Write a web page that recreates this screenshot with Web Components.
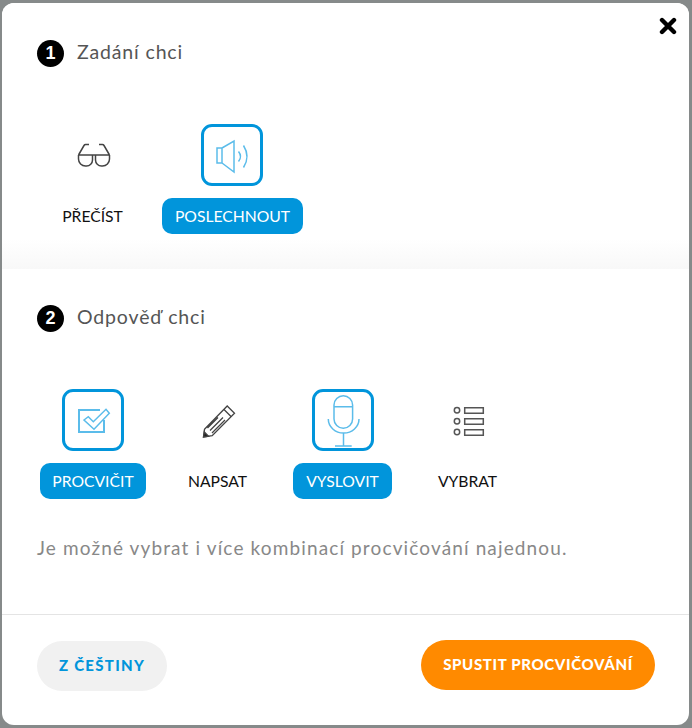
<!DOCTYPE html>
<html lang="cs">
<head>
<meta charset="utf-8">
<title>Procvičování</title>
<style>
  html, body { margin: 0; padding: 0; height: 100%; }
  body { background: #868a8a; font-family: "Lato", "Liberation Sans", sans-serif; overflow: hidden; }
</style>
</head>
<body>
<template id="modal-tpl">
  <style>
    :host {
      display: flex;
      flex-direction: column;
      position: relative;
      box-sizing: border-box;
      width: 687px;
      height: 722px;
      margin: 3px 0 0 2px;
      background: #fff;
      border-radius: 12px;
      overflow: hidden;
    }
    button {
      position: absolute;
      top: 14px;
      right: 12px;
      width: 18px;
      height: 18px;
      padding: 0;
      border: 0;
      background: none;
      line-height: 0;
    }
  </style>
  <button aria-label="Zavřít">
    <svg width="18" height="18" viewBox="0 0 18 18"><path d="M3 3l12 12M15 3L3 15" stroke="#000" stroke-width="4.4" stroke-linecap="round"/></svg>
  </button>
  <slot></slot>
</template>

<template id="section-tpl">
  <style>
    :host { display: block; box-sizing: border-box; padding: 37px 35px 35px; }
    :host([shaded]) { background: linear-gradient(#fff 236px, #f8f8f8 266px); }
    :host([second]) { padding: 36px 35px 0; height: 345px; }
    .head { display: flex; align-items: center; gap: 13px; height: 27px; }
    .num {
      width: 27px; height: 27px; border-radius: 50%;
      background: #000; color: #fff;
      display: grid; place-items: center;
      font: 700 18px "Liberation Sans", sans-serif;
    }
    .title { font-size: 19.5px; color: #555; letter-spacing: .85px; padding-bottom: 4px; }
    .row { display: flex; margin-top: 57px; margin-left: 3px; }
    :host([shaded]) .row { margin-left: 13px; }
  </style>
  <div class="head"><span class="num"></span><span class="title"></span></div>
  <div class="row"><slot></slot></div>
  <slot name="after"></slot>
</template>

<template id="option-tpl">
  <style>
    :host { display: flex; flex-direction: column; align-items: center; color: #222; }
    :host([selected]) { color: #5bbcea; }
    .box {
      box-sizing: border-box;
      width: 62px; height: 62px;
      margin-right: var(--nudge, 0);
      border: 3px solid transparent;
      border-radius: 11px;
      display: grid; place-items: center;
    }
    :host([selected]) .box { border-color: #0195db; }
    .label {
      box-sizing: border-box;
      margin-top: 12px;
      height: 36px;
      width: 100%;
      display: flex; align-items: center; justify-content: center;
      border-radius: 10px;
      font-size: 15.7px;
      color: #111;
      white-space: nowrap;
    }
    :host([selected]) .label { background: #0195db; color: #fff; }
    ::slotted(svg) { display: block; width: 56px; height: 56px; fill: none; }
  </style>
  <div class="box"><slot></slot></div>
  <div class="label"></div>
</template>

<template id="footer-tpl">
  <style>
    :host {
      display: flex;
      justify-content: space-between;
      align-items: flex-start;
      box-sizing: border-box;
      height: 111px;
      padding: 25px 34px 0 35px;
      border-top: 1px solid #e4e4e4;
    }
  </style>
  <slot></slot>
</template>

<template id="pill-tpl">
  <style>
    :host {
      display: flex; align-items: center; justify-content: center;
      box-sizing: border-box;
      height: 50px;
      border-radius: 25px;
      font-weight: 900;
      font-size: 15px;
      white-space: nowrap;
      background: #f1f1f1;
      color: #0195db;
      margin-top: 1px;
      width: 130px;
      letter-spacing: 1.3px;
      padding-bottom: 2px;
    }
    :host([primary]) { background: #ff8a00; color: #fff; margin-top: 0; width: 234px; letter-spacing: .65px; }
  </style>
  <slot></slot>
</template>

<practice-modal>
  <practice-section num="1" heading="Zadání chci" shaded>
    <practice-option label="PŘEČÍST" style="width:85px">
      <svg viewBox="3 3 56 56" stroke="#444" stroke-width="1.5">
        <path d="M16.500 31H47.500M16.500 31v4a7 7 0 0 0 7 7h1a6 6 0 0 0 6-6v-5M33.500 31v5a6 6 0 0 0 6 6h1a7 7 0 0 0 7-7v-4M16.500 31L22 21.500a2 2 0 0 1 2-1h3M47.500 31L42 21.500a2 2 0 0 0-2-1h-3"/>
      </svg>
    </practice-option>
    <practice-option label="POSLECHNOUT" selected style="width:141px;margin-left:27px;--nudge:1px">
      <svg viewBox="3 3 56 56" stroke="currentColor" stroke-width="1.5">
        <path d="M16 24h5v15h-5zM21 24L33 17V48L21 39M37.500 27.500q4 5 0 10M42.500 21.500q7 11 0 22"/>
      </svg>
    </practice-option>
  </practice-section>

  <practice-section num="2" heading="Odpověď chci" second>
    <practice-option label="PROCVIČIT" selected style="width:106px">
      <svg viewBox="3 3 56 56" stroke="currentColor" stroke-width="1.500">
        <path stroke-width="2" d="M38 21H17V43H42V31"/>
        <path fill="#fff" d="M22 31L26.300 27.700L31.300 32.700L44 20.300L47.300 24.300L32 40.300Z"/>
      </svg>
    </practice-option>
    <practice-option label="NAPSAT" style="width:83px;margin-left:30px">
      <svg viewBox="3 3 56 56" stroke="#444" stroke-width="1.300">
        <path d="M17.500 40.300L40.200 17L47.500 24.300L25.200 46.700L16.500 48ZM37 20.500L44 27.500M20.500 39L31 28.500M23 41.500L36 28.500M25 44L38 31"/>
        <path d="M16.500 48L17.300 43L21.500 47.300Z" fill="#222"/>
      </svg>
    </practice-option>
    <practice-option label="VYSLOVIT" selected style="width:99px;margin-left:34px">
      <svg viewBox="3 3 56 56" stroke="currentColor" stroke-width="1.500">
        <path d="M22 16a9.300 9.300 0 0 1 18.600 0V30a9.300 9.300 0 0 1-18.600 0ZM22 17.700H40.600M16.300 30a15.300 14 0 0 0 30.700 0M31.500 44V57M23 57H39.700"/>
      </svg>
    </practice-option>
    <practice-option label="VYBRAT" style="width:83px;margin-left:34px">
      <svg viewBox="3 3 56 56" stroke="#555" stroke-width="1.500">
        <circle cx="20" cy="21.300" r="2.700"/><circle cx="20" cy="32.300" r="2.700"/><circle cx="20" cy="43" r="2.700"/>
        <path d="M27.700 18.700H46.300V24.300H27.700ZM27.700 29.700H46.300V35.300H27.700ZM27.700 40.700H46.300V46.300H27.700Z"/>
      </svg>
    </practice-option>
    <practice-hint slot="after">Je možné vybrat i více kombinací procvičování najednou.</practice-hint>
  </practice-section>

  <practice-footer>
    <practice-pill>Z ČEŠTINY</practice-pill>
    <practice-pill primary>SPUSTIT PROCVIČOVÁNÍ</practice-pill>
  </practice-footer>
</practice-modal>

<script>
function shadowFrom (host, id) {
  const root = host.attachShadow({ mode: 'open' })
  root.appendChild(document.getElementById(id).content.cloneNode(true))
  return root
}

class PracticeModal extends HTMLElement {
  constructor () {
    super()
    shadowFrom(this, 'modal-tpl')
  }
}

class PracticeSection extends HTMLElement {
  constructor () {
    super()
    this._root = shadowFrom(this, 'section-tpl')
  }

  connectedCallback () {
    this._root.querySelector('.num').textContent = this.getAttribute('num')
    this._root.querySelector('.title').textContent = this.getAttribute('heading')
  }
}

class PracticeOption extends HTMLElement {
  constructor () {
    super()
    this._root = shadowFrom(this, 'option-tpl')
  }

  connectedCallback () {
    this._root.querySelector('.label').textContent = this.getAttribute('label')
  }
}

class PracticeHint extends HTMLElement {
  constructor () {
    super()
    this.attachShadow({ mode: 'open' }).innerHTML = `
      <style>
        :host { display: block; margin: 37px 0 0 0; font-size: 19px; line-height: 24px; color: #888; letter-spacing: 1.13px; }
      </style>
      <slot></slot>`
  }
}

class PracticeFooter extends HTMLElement {
  constructor () {
    super()
    shadowFrom(this, 'footer-tpl')
  }
}

class PracticePill extends HTMLElement {
  constructor () {
    super()
    shadowFrom(this, 'pill-tpl')
  }
}

customElements.define('practice-modal', PracticeModal)
customElements.define('practice-section', PracticeSection)
customElements.define('practice-option', PracticeOption)
customElements.define('practice-hint', PracticeHint)
customElements.define('practice-footer', PracticeFooter)
customElements.define('practice-pill', PracticePill)
</script>
</body>
</html>
